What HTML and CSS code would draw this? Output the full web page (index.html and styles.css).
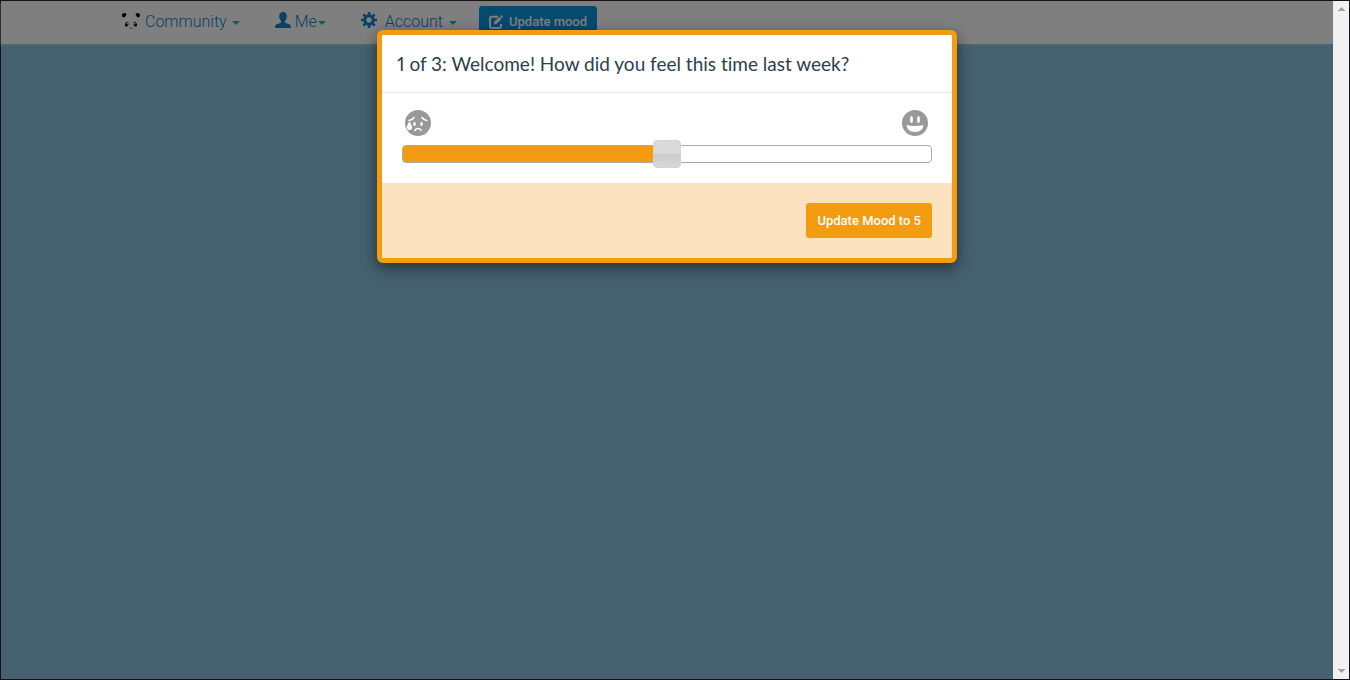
FILE: index.html
```html
<!DOCTYPE html>
<html lang="en">
<head>
<meta charset="utf-8">
<title>Update mood</title>
<link rel="stylesheet" href="styles.css">
</head>
<body>
<div class="frame">
  <div class="page">
    <nav class="navbar">
      <a class="nav-link community" href="#">
        <svg class="panda" viewBox="0 0 20 18" width="20" height="18" aria-hidden="true">
          <path d="M1 3Q1 1 3.500 1Q5.500 1.200 5.500 2.500Q4.500 5 2.500 5.500Q1 5 1 3ZM19 3Q19 1 16.500 1Q14.500 1.200 14.500 2.500Q15.500 5 17.500 5.500Q19 5 19 3Z" fill="#000"/>
          <path d="M7 9.500Q4 10.500 4 13Q4 15 6 14.500Q8.500 13 7 9.500ZM13 9.500Q16 10.500 16 13Q16 15 14 14.500Q11.500 13 13 9.500Z" fill="#000"/>
          <circle cx="6.500" cy="11.500" r="1" fill="#fff"/><circle cx="13.500" cy="11.500" r="1" fill="#fff"/>
          <path d="M8 15.500H12L10 17.500Z" fill="#999"/>
        </svg>
        <span>Community</span><span class="caret"></span>
      </a>
      <a class="nav-link me" href="#">
        <svg viewBox="0 0 16 16" width="16" height="16" aria-hidden="true"><path d="M8 0C5.500 0 4.200 1.700 4.200 4.200C4.200 6.300 5 7.700 6 8.700V10.500C4.500 11.800.5 12 .2 14V16H15.800V14C15.500 12 11.500 11.800 10 10.500V8.700C11 7.700 11.800 6.300 11.800 4.200C11.800 1.700 10.500 0 8 0Z" fill="currentColor"/></svg>
        <span>Me</span><span class="caret"></span>
      </a>
      <a class="nav-link account" href="#">
        <svg viewBox="0 0 16 16" width="16" height="16" aria-hidden="true"><path fill="none" stroke="currentColor" stroke-width="3" d="M12.200 8A4.200 4.200 0 1 1 3.800 8A4.200 4.200 0 1 1 12.200 8Z"/><path stroke="currentColor" stroke-width="2.600" d="M8 0V3M8 13V16M0 8H3M13 8H16M2.400 2.400L4.500 4.500M11.500 11.500L13.600 13.600M13.600 2.400L11.500 4.500M4.500 11.500L2.400 13.600"/></svg>
        <span>Account</span><span class="caret"></span>
      </a>
      <button class="nav-button" type="button">
        <svg viewBox="0 0 14 14" width="14" height="14" aria-hidden="true"><path d="M9 1.800H3Q1 1.800 1 3.800V11Q1 13 3 13H10Q12 13 12 11V9" fill="none" stroke="currentColor" stroke-width="2"/><path d="M5 7L10.300 1.700L12.500 3.900L7.200 9.200H5ZM11 1L11.800.2Q12.200 0 12.600.4L13.800 1.600Q14 2 13.800 2.400L13 3.200Z" fill="currentColor"/></svg>
        <span>Update mood</span>
      </button>
    </nav>
    <div class="overlay">
      <form class="modal" role="dialog" aria-labelledby="mood-title">
        <header class="modal-header"><h1 id="mood-title">1 of 3: Welcome! How did you feel this time last week?</h1></header>
        <div class="modal-body">
          <div class="faces">
            <svg viewBox="0 0 26 26" width="26" height="26" aria-hidden="true">
              <circle cx="13" cy="13" r="13" fill="#999"/>
              <path d="M4 10.500Q7.500 10 9 7.500M17 7.500Q18.500 10 22 10.500M10 20.500Q10.500 18.500 13 18.500T16 20.500" fill="none" stroke="#fff" stroke-width="1.500" stroke-linecap="round"/>
              <path d="M4.500 11.500Q1.500 16 1.700 17.500Q2 20 4.500 20Q7 20 7 17.500Q7 15.500 4.500 11.500Z" fill="#fff"/>
              <ellipse cx="9.500" cy="14" rx="1.300" ry="2" fill="#fff"/><ellipse cx="16.500" cy="14" rx="1.300" ry="2" fill="#fff"/>
            </svg>
            <svg viewBox="0 0 26 26" width="26" height="26" aria-hidden="true">
              <circle cx="13" cy="13" r="13" fill="#999"/>
              <ellipse cx="9.500" cy="9.500" rx="1.400" ry="3.500" fill="#fff"/><ellipse cx="16.500" cy="9.500" rx="1.400" ry="3.500" fill="#fff"/>
              <path d="M4.500 15Q13 17 21.500 15Q21 22 13 22T4.500 15Z" fill="#fff"/>
            </svg>
          </div>
          <input class="mood-slider" type="range" min="0" max="10" value="5" aria-label="Mood">
        </div>
        <footer class="modal-footer"><button class="submit" type="button">Update Mood to 5</button></footer>
      </form>
    </div>
  </div>
  <div class="scrollbar" aria-hidden="true">
    <svg viewBox="0 0 7 4" width="7" height="4"><path d="M0 4V3H1V2H2V1H3V0H4V1H5V2H6V3H7V4Z" fill="#a3a3a3"/></svg>
    <svg viewBox="0 0 7 4" width="7" height="4"><path d="M0 0V1H1V2H2V3H3V4H4V3H5V2H6V1H7V0Z" fill="#a3a3a3"/></svg>
  </div>
</div>
</body>
</html>
```

FILE: styles.css
```css
* { box-sizing: border-box; }
body { margin: 0; font-family: Roboto, "Liberation Sans", sans-serif; }
.frame { display: flex; min-height: 100vh; border: 1px solid #141216; }
.page { position: relative; flex: 1; background: #8ac2de; }
.navbar {
  display: flex;
  align-items: flex-start;
  height: 43px;
  padding: 5px 0 0 120px;
  background: #fff;
  box-shadow: 0 2px 1px #9acbe3;
}
.nav-link {
  display: flex;
  align-items: center;
  height: 30px;
  color: #1083c6;
  font-size: 16px;
  font-weight: 300;
  text-decoration: none;
}
.nav-link svg { margin-bottom: 3px; }
.community { gap: 4px; }
.me { margin-left: 35px; gap: 4px; }
.me .caret { margin-left: -3px; }
.account { margin-left: 35px; gap: 8px; }
.community .caret { margin-left: 1px; }
.account .caret { margin-left: -2px; }
.nav-link .panda { margin-bottom: 0; }
.caret {
  margin-top: 4px;
  border: 4px solid transparent;
  border-top-color: #18bc9c;
  border-bottom: 0;
}
.nav-button {
  display: flex;
  align-items: center;
  gap: 6px;
  height: 31px;
  margin-left: 22px;
  padding: 0 10px;
  border: 0;
  border-radius: 3px;
  background: #0d94df;
  color: #fff;
  font: 500 13px Roboto, sans-serif;
}
.overlay {
  position: absolute;
  inset: 0;
  display: flex;
  align-items: flex-start;
  justify-content: center;
  padding-top: 29px;
  background: rgba(0, 0, 0, 0.5);
}
.modal {
  width: 100%;
  max-width: 580px;
  border: 5px solid #f39c12;
  border-radius: 6px;
  background: #fff;
  box-shadow: 0 5px 15px rgba(0, 0, 0, 0.5);
}
.modal-header { padding: 15px; border-bottom: 1px solid #e5e5e5; }
.modal-header h1 {
  margin: 0;
  color: #2c3e50;
  font: 400 19px/27px Lato, sans-serif;
  font-variant: no-common-ligatures proportional-nums;
}
.modal-body { padding: 17px 20px 16px; }
.faces { display: flex; justify-content: space-between; padding: 0 4px 0 3px; }
.mood-slider {
  display: block;
  width: 100%;
  height: 18px;
  margin: 9px 0 4px;
  appearance: none;
  border: 1px solid #aaa;
  border-radius: 4px;
  background: linear-gradient(to right, #f39c12 50%, #fff 50%);
}
.mood-slider::-webkit-slider-thumb {
  width: 28px;
  height: 28px;
  appearance: none;
  border: 1px solid #d3d3d3;
  border-radius: 4px;
  background: linear-gradient(#dadada 50%, #cacaca 50%, #d8d8d8);
}
.modal-footer {
  display: flex;
  justify-content: flex-end;
  padding: 20px;
  background: #fce2bf;
}
.submit {
  height: 35px;
  padding: 0 11px;
  border: 0;
  border-radius: 3px;
  background: #f39c12;
  color: #fff;
  font: 500 13px Roboto, sans-serif;
}
.scrollbar {
  display: flex;
  flex-direction: column;
  align-items: center;
  justify-content: space-between;
  width: 16px;
  padding: 6px 0;
  background: #f1f1f1;
}
```
